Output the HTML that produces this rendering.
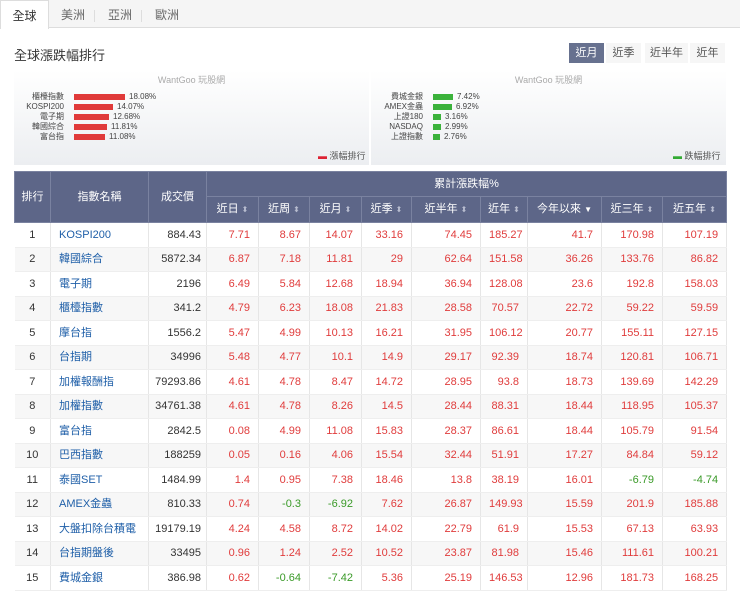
<!DOCTYPE html><html><head><meta charset="utf-8"><style>
body{margin:0;width:740px;height:587px;overflow:hidden;background:#fff;font-family:"Liberation Sans","Noto Sans CJK TC",sans-serif;font-size:11px;color:#333;position:relative}
.tabs{position:absolute;left:0;top:0;width:740px;height:27px;background:#f5f5f5;border-bottom:1px solid #ddd}
.tab{position:absolute;top:0;height:27px;line-height:30px;font-size:12px;color:#666}
.tab.a{background:#fff;border:1px solid #ddd;border-bottom:none;height:28px;color:#333;left:0;width:47px;text-align:center}
.sep{position:absolute;top:10px;width:1px;height:12px;background:#ddd}
.title{position:absolute;left:14px;top:45px;font-size:13px;color:#333}
.btn{position:absolute;top:43px;height:20px;line-height:20px;font-size:11px;color:#555;text-align:center;background:#f6f6f6}
.btn.a{background:#67718f;color:#fff}
.chart{position:absolute;top:70px;height:95px;background:linear-gradient(#fff,#eceef1)}
.wm{position:absolute;top:3px;width:100%;text-align:center;font-size:9px;color:#aaa}
.lbl{position:absolute;font-size:8px;color:#444;text-align:right;width:60px;line-height:10px;white-space:nowrap}
.bar{position:absolute;height:6px}
.pct{position:absolute;font-size:8px;color:#444;line-height:10px}
.leg{position:absolute;top:79px;font-size:9px;color:#555}
table{position:absolute;left:14px;top:171px;border-collapse:collapse;table-layout:fixed;width:712px}
th{background:#5d6688;color:#fff;font-weight:normal;font-size:11px;border:1px solid #7a82a0;padding:0;line-height:14px}
td{height:23.5px;padding:0 8px;font-size:11px;line-height:14px;border-right:1px solid #e6e6e6;border-bottom:1px solid #eee;text-align:right;color:#333;white-space:nowrap;overflow:hidden}
td:nth-child(3){padding:0 5px}
tr:nth-child(even) td{background:#f7f7f7}
td.r{text-align:center}td.n{text-align:left;color:#1f5fa8}
.p{color:#e03c3c}.g{color:#3a9a28}
.s{font-size:8px;color:#b8bdd0}
</style></head><body>
<div class="tabs"><div class="tab a">全球</div><div class="tab" style="left:61px">美洲</div><div class="sep" style="left:94px"></div><div class="tab" style="left:108px">亞洲</div><div class="sep" style="left:141px"></div><div class="tab" style="left:155px">歐洲</div></div>
<div class="title">全球漲跌幅排行</div>
<div class="btn a" style="left:569px;width:35px">近月</div><div class="btn" style="left:606px;width:35px">近季</div><div class="btn" style="left:645px;width:43px">近半年</div><div class="btn" style="left:690px;width:35px">近年</div>
<div class="chart" style="left:14px;width:355px"><div class="wm">WantGoo 玩股網</div>
<div class="lbl" style="left:-10px;top:22px">櫃檯指數</div><div class="bar" style="left:60px;top:24px;width:51px;background:#e03a3a"></div><div class="pct" style="left:115px;top:22px">18.08%</div>
<div class="lbl" style="left:-10px;top:32px">KOSPI200</div><div class="bar" style="left:60px;top:34px;width:39px;background:#e03a3a"></div><div class="pct" style="left:103px;top:32px">14.07%</div>
<div class="lbl" style="left:-10px;top:42px">電子期</div><div class="bar" style="left:60px;top:44px;width:35px;background:#e03a3a"></div><div class="pct" style="left:99px;top:42px">12.68%</div>
<div class="lbl" style="left:-10px;top:52px">韓國綜合</div><div class="bar" style="left:60px;top:54px;width:33px;background:#e03a3a"></div><div class="pct" style="left:97px;top:52px">11.81%</div>
<div class="lbl" style="left:-10px;top:62px">富台指</div><div class="bar" style="left:60px;top:64px;width:31px;background:#e03a3a"></div><div class="pct" style="left:95px;top:62px">11.08%</div>
<div class="leg" style="left:304px"><span style="color:#d23">▬</span> 漲幅排行</div></div>
<div class="chart" style="left:371px;width:355px"><div class="wm">WantGoo 玩股網</div>
<div class="lbl" style="left:-8px;top:22px">費城金銀</div><div class="bar" style="left:62px;top:24px;width:20px;background:#3bb23b"></div><div class="pct" style="left:86px;top:22px">7.42%</div>
<div class="lbl" style="left:-8px;top:32px">AMEX金蟲</div><div class="bar" style="left:62px;top:34px;width:19px;background:#3bb23b"></div><div class="pct" style="left:85px;top:32px">6.92%</div>
<div class="lbl" style="left:-8px;top:42px">上證180</div><div class="bar" style="left:62px;top:44px;width:8px;background:#3bb23b"></div><div class="pct" style="left:74px;top:42px">3.16%</div>
<div class="lbl" style="left:-8px;top:52px">NASDAQ</div><div class="bar" style="left:62px;top:54px;width:8px;background:#3bb23b"></div><div class="pct" style="left:74px;top:52px">2.99%</div>
<div class="lbl" style="left:-8px;top:62px">上證指數</div><div class="bar" style="left:62px;top:64px;width:7px;background:#3bb23b"></div><div class="pct" style="left:73px;top:62px">2.76%</div>
<div class="leg" style="left:302px"><span style="color:#3a3">▬</span> 跌幅排行</div></div>
<table>
<colgroup><col style="width:36px"><col style="width:98px"><col style="width:58px"><col style="width:52px"><col style="width:51px"><col style="width:52px"><col style="width:50px"><col style="width:69px"><col style="width:47px"><col style="width:74px"><col style="width:61px"><col style="width:64px"></colgroup>
<tr style="height:25px"><th rowspan="2">排行</th><th rowspan="2">指數名稱</th><th rowspan="2">成交價</th><th colspan="9">累計漲跌幅%</th></tr>
<tr style="height:26px"><th>近日 <span class="s">⬍</span></th><th>近周 <span class="s">⬍</span></th><th>近月 <span class="s">⬍</span></th><th>近季 <span class="s">⬍</span></th><th>近半年 <span class="s">⬍</span></th><th>近年 <span class="s">⬍</span></th><th>今年以來 <span style="font-size:8px">▼</span></th><th>近三年 <span class="s">⬍</span></th><th>近五年 <span class="s">⬍</span></th></tr>
<tr><td class="r">1</td><td class="n">KOSPI200</td><td>884.43</td><td class="p">7.71</td><td class="p">8.67</td><td class="p">14.07</td><td class="p">33.16</td><td class="p">74.45</td><td class="p">185.27</td><td class="p">41.7</td><td class="p">170.98</td><td class="p">107.19</td></tr>
<tr><td class="r">2</td><td class="n">韓國綜合</td><td>5872.34</td><td class="p">6.87</td><td class="p">7.18</td><td class="p">11.81</td><td class="p">29</td><td class="p">62.64</td><td class="p">151.58</td><td class="p">36.26</td><td class="p">133.76</td><td class="p">86.82</td></tr>
<tr><td class="r">3</td><td class="n">電子期</td><td>2196</td><td class="p">6.49</td><td class="p">5.84</td><td class="p">12.68</td><td class="p">18.94</td><td class="p">36.94</td><td class="p">128.08</td><td class="p">23.6</td><td class="p">192.8</td><td class="p">158.03</td></tr>
<tr><td class="r">4</td><td class="n">櫃檯指數</td><td>341.2</td><td class="p">4.79</td><td class="p">6.23</td><td class="p">18.08</td><td class="p">21.83</td><td class="p">28.58</td><td class="p">70.57</td><td class="p">22.72</td><td class="p">59.22</td><td class="p">59.59</td></tr>
<tr><td class="r">5</td><td class="n">摩台指</td><td>1556.2</td><td class="p">5.47</td><td class="p">4.99</td><td class="p">10.13</td><td class="p">16.21</td><td class="p">31.95</td><td class="p">106.12</td><td class="p">20.77</td><td class="p">155.11</td><td class="p">127.15</td></tr>
<tr><td class="r">6</td><td class="n">台指期</td><td>34996</td><td class="p">5.48</td><td class="p">4.77</td><td class="p">10.1</td><td class="p">14.9</td><td class="p">29.17</td><td class="p">92.39</td><td class="p">18.74</td><td class="p">120.81</td><td class="p">106.71</td></tr>
<tr><td class="r">7</td><td class="n">加權報酬指</td><td>79293.86</td><td class="p">4.61</td><td class="p">4.78</td><td class="p">8.47</td><td class="p">14.72</td><td class="p">28.95</td><td class="p">93.8</td><td class="p">18.73</td><td class="p">139.69</td><td class="p">142.29</td></tr>
<tr><td class="r">8</td><td class="n">加權指數</td><td>34761.38</td><td class="p">4.61</td><td class="p">4.78</td><td class="p">8.26</td><td class="p">14.5</td><td class="p">28.44</td><td class="p">88.31</td><td class="p">18.44</td><td class="p">118.95</td><td class="p">105.37</td></tr>
<tr><td class="r">9</td><td class="n">富台指</td><td>2842.5</td><td class="p">0.08</td><td class="p">4.99</td><td class="p">11.08</td><td class="p">15.83</td><td class="p">28.37</td><td class="p">86.61</td><td class="p">18.44</td><td class="p">105.79</td><td class="p">91.54</td></tr>
<tr><td class="r">10</td><td class="n">巴西指數</td><td>188259</td><td class="p">0.05</td><td class="p">0.16</td><td class="p">4.06</td><td class="p">15.54</td><td class="p">32.44</td><td class="p">51.91</td><td class="p">17.27</td><td class="p">84.84</td><td class="p">59.12</td></tr>
<tr><td class="r">11</td><td class="n">泰國SET</td><td>1484.99</td><td class="p">1.4</td><td class="p">0.95</td><td class="p">7.38</td><td class="p">18.46</td><td class="p">13.8</td><td class="p">38.19</td><td class="p">16.01</td><td class="g">-6.79</td><td class="g">-4.74</td></tr>
<tr><td class="r">12</td><td class="n">AMEX金蟲</td><td>810.33</td><td class="p">0.74</td><td class="g">-0.3</td><td class="g">-6.92</td><td class="p">7.62</td><td class="p">26.87</td><td class="p">149.93</td><td class="p">15.59</td><td class="p">201.9</td><td class="p">185.88</td></tr>
<tr><td class="r">13</td><td class="n">大盤扣除台積電</td><td>19179.19</td><td class="p">4.24</td><td class="p">4.58</td><td class="p">8.72</td><td class="p">14.02</td><td class="p">22.79</td><td class="p">61.9</td><td class="p">15.53</td><td class="p">67.13</td><td class="p">63.93</td></tr>
<tr><td class="r">14</td><td class="n">台指期盤後</td><td>33495</td><td class="p">0.96</td><td class="p">1.24</td><td class="p">2.52</td><td class="p">10.52</td><td class="p">23.87</td><td class="p">81.98</td><td class="p">15.46</td><td class="p">111.61</td><td class="p">100.21</td></tr>
<tr><td class="r">15</td><td class="n">費城金銀</td><td>386.98</td><td class="p">0.62</td><td class="g">-0.64</td><td class="g">-7.42</td><td class="p">5.36</td><td class="p">25.19</td><td class="p">146.53</td><td class="p">12.96</td><td class="p">181.73</td><td class="p">168.25</td></tr>
</table>
</body></html>
